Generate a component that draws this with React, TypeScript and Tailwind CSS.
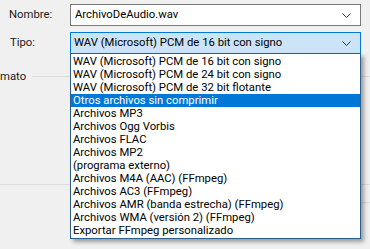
const items = [
  "WAV (Microsoft) PCM de 16 bit con signo",
  "WAV (Microsoft) PCM de 24 bit con signo",
  "WAV (Microsoft) PCM de 32 bit flotante",
  "Otros archivos sin comprimir",
  "Archivos MP3",
  "Archivos Ogg Vorbis",
  "Archivos FLAC",
  "Archivos MP2",
  "(programa externo)",
  "Archivos M4A (AAC) (FFmpeg)",
  "Archivos AC3 (FFmpeg)",
  "Archivos AMR (banda estrecha) (FFmpeg)",
  "Archivos WMA (versión 2) (FFmpeg)",
  "Exportar FFmpeg personalizado",
];

function Chevron() {
  return (
    <svg width="9" height="5" viewBox="0 0 9 5" className="shrink-0">
      <path d="M0.5 0.5 L4.5 4.5 L8.5 0.5" fill="none" stroke="#333" strokeWidth="1" />
    </svg>
  );
}

export default function App() {
  return (
    <div className="relative h-[249px] w-[370px] overflow-hidden bg-[#f0f0f0] font-['Roboto','Liberation_Sans',Arial,sans-serif] text-[11.3px] leading-none text-black">
      <div className="flex flex-col pt-[4px]">
        <div className="flex items-center">
          <span className="w-[70px] pl-[9px] text-[#1a1a1a]">Nombre:</span>
          <div className="flex h-[22px] w-[291px] items-center justify-between border border-[#7a7a7a] bg-white pl-[4px] pr-[9px]">
            <span>ArchivoDeAudio.wav</span>
            <Chevron />
          </div>
        </div>
        <div className="mt-[6px] flex items-center">
          <span className="w-[70px] pl-[10px] text-[#1a1a1a]">Tipo:</span>
          <div className="flex h-[22px] w-[291px] items-center justify-between border border-[#0078d7] bg-[#cce4f7] pl-[3px] pr-[9px]">
            <span>WAV (Microsoft) PCM de 16 bit con signo</span>
            <Chevron />
          </div>
        </div>
        <div className="mt-[17px] flex items-center">
          <span className="text-[#1a1a1a]">mato</span>
          <div className="ml-[6px] h-px flex-1 bg-[#dcdcdc]" />
        </div>
        <div className="mt-[102px] h-px w-full bg-[#dcdcdc]" />
        <div className="ml-[200px] mt-[17px] h-px bg-[#dcdcdc]" />
      </div>

      <ul className="absolute left-[70px] top-[53px] w-[291px] border border-[#2c5f8e] bg-white py-px shadow-[3px_3px_4px_rgba(0,0,0,0.35)]">
        {items.map((it, i) => (
          <li
            key={it}
            className={
              "flex h-[13px] items-center pl-[2px] " +
              (i === 3 ? "bg-[#0078d7] text-white" : "text-black")
            }
          >
            {it}
          </li>
        ))}
      </ul>
    </div>
  );
}
